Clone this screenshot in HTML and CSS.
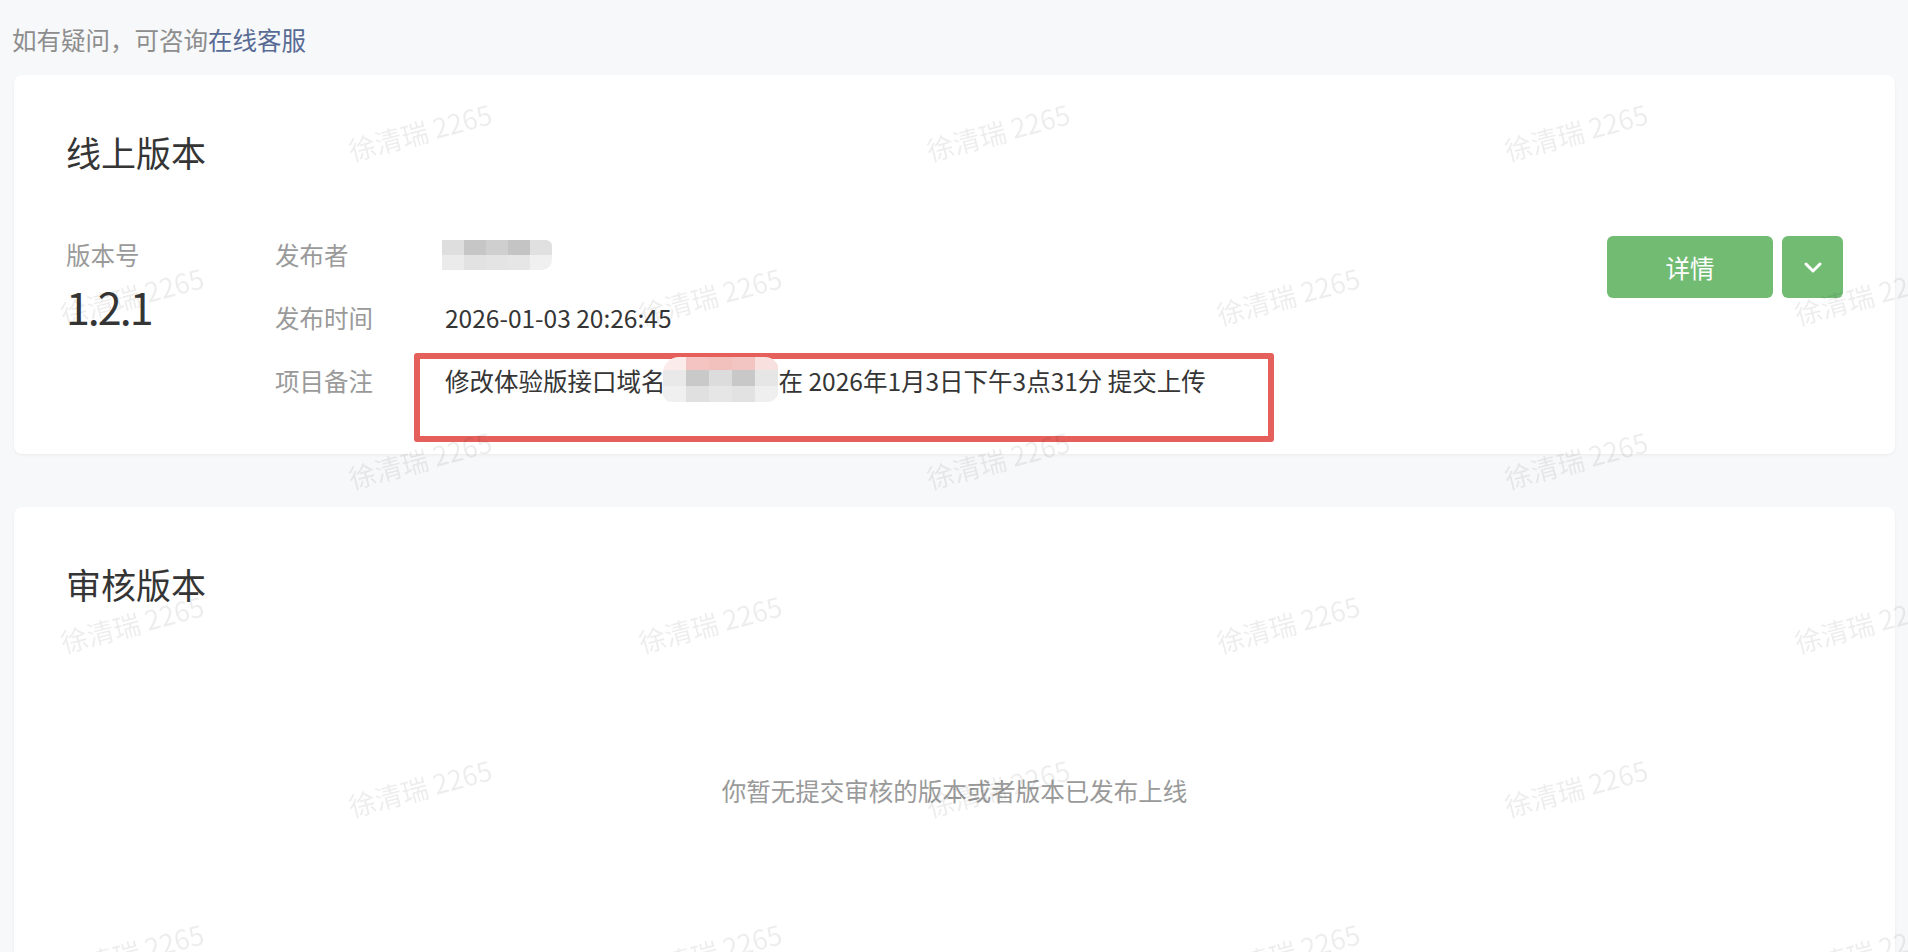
FILE: index.html
```html
<!DOCTYPE html>
<html lang="zh-CN">
<head>
<meta charset="utf-8">
<title>版本管理</title>
<link rel="stylesheet" href="styles.css">
</head>
<body>
<div class="help">如有疑问，可咨询<a class="link" href="#">在线客服</a></div>

<main class="page">
  <section class="card card-online">
    <h2 class="card-title">线上版本</h2>
    <div class="version">
      <div class="version-no">
        <div class="label">版本号</div>
        <div class="version-num">1.2.1</div>
      </div>
      <div class="version-info">
        <div class="row">
          <div class="row-label">发布者</div>
          <div class="row-value">
            <div class="mosaic mosaic-name">
              <i class="m1"></i><i class="m2"></i><i class="m3"></i><i class="m4"></i><i class="m5"></i>
              <i class="m6"></i><i class="m7"></i><i class="m8"></i><i class="m9"></i><i class="m10"></i>
            </div>
          </div>
        </div>
        <div class="row">
          <div class="row-label">发布时间</div>
          <div class="row-value">2026-01-03 20:26:45</div>
        </div>
        <div class="row">
          <div class="row-label">项目备注</div>
          <div class="row-value remark">
            <span class="mark-box"></span>
            <span>修改体验版接口域名</span><span class="mosaic mosaic-remark">
              <i class="p1"></i><i class="p2"></i><i class="p3"></i><i class="p4"></i><i class="p5"></i>
              <i class="r1"></i><i class="r2"></i><i class="r3"></i><i class="r4"></i><i class="r5"></i>
              <i class="s1"></i><i class="s2"></i><i class="s3"></i><i class="s4"></i><i class="s5"></i>
            </span><span>在 2026年1月3日下午3点31分 提交上传</span>
          </div>
        </div>
      </div>
      <div class="actions">
        <button class="btn btn-main">详情</button>
        <button class="btn btn-drop" aria-label="更多">
          <svg width="18" height="11" viewBox="0 0 18 11"><polyline points="2,2 9,9 16,2" fill="none" stroke="#fff" stroke-width="3" stroke-linecap="round" stroke-linejoin="round"/></svg>
        </button>
      </div>
    </div>
  </section>

  <section class="card card-review">
    <h2 class="card-title">审核版本</h2>
    <div class="empty">你暂无提交审核的版本或者版本已发布上线</div>
  </section>
</main>

<div class="wm" aria-hidden="true">
  <div class="wm-row wm-b"><span>徐清瑞 2265</span><span>徐清瑞 2265</span><span>徐清瑞 2265</span><span>徐清瑞 2265</span></div>
  <div class="wm-row wm-a"><span>徐清瑞 2265</span><span>徐清瑞 2265</span><span>徐清瑞 2265</span></div>
  <div class="wm-row wm-b"><span>徐清瑞 2265</span><span>徐清瑞 2265</span><span>徐清瑞 2265</span><span>徐清瑞 2265</span></div>
  <div class="wm-row wm-a"><span>徐清瑞 2265</span><span>徐清瑞 2265</span><span>徐清瑞 2265</span></div>
  <div class="wm-row wm-b"><span>徐清瑞 2265</span><span>徐清瑞 2265</span><span>徐清瑞 2265</span><span>徐清瑞 2265</span></div>
  <div class="wm-row wm-a"><span>徐清瑞 2265</span><span>徐清瑞 2265</span><span>徐清瑞 2265</span></div>
  <div class="wm-row wm-b"><span>徐清瑞 2265</span><span>徐清瑞 2265</span><span>徐清瑞 2265</span><span>徐清瑞 2265</span></div>
</div>
</body>
</html>
```

FILE: styles.css
```css
* { box-sizing: border-box; }

html, body {
  margin: 0;
  padding: 0;
  height: 100%;
  overflow: hidden;
}

body {
  background: #f7f8fa;
  font-family: "Noto Sans CJK SC", "Noto Sans", sans-serif;
  color: #353535;
}

.help {
  padding: 20px 0 0 12px;
  font-size: 24.5px;
  line-height: 39px;
  color: #8d8d8d;
}

.link {
  color: #576b95;
  text-decoration: none;
}

.page {
  padding: 16px 13px 0 14px;
  display: flex;
  flex-direction: column;
  gap: 53px;
}

.card {
  background: #fff;
  border-radius: 8px;
  padding: 52px;
  box-shadow: 0 1px 3px rgba(0, 0, 0, 0.06);
}

.card-online {
  padding-bottom: 54px;
}

.card-title {
  margin: 0;
  font-size: 35px;
  font-weight: 400;
  line-height: 49px;
  color: #353535;
}

.version {
  display: flex;
  align-items: flex-start;
  margin-top: 59px;
}

.version-no {
  width: 209px;
  flex-shrink: 0;
}

.label,
.row-label {
  font-size: 24.5px;
  line-height: 39px;
  color: #9a9a9a;
}

.version-num {
  font-size: 43px;
  line-height: 60px;
  margin-top: 2px;
  color: #353535;
  letter-spacing: -2px;
}

.version-info {
  flex: 1;
  display: flex;
  flex-direction: column;
  gap: 24px;
}

.row {
  display: flex;
  font-size: 24.5px;
  line-height: 39px;
  height: 39px;
}

.row-label {
  width: 170px;
  flex-shrink: 0;
}

.row-value {
  color: #353535;
  display: flex;
  align-items: center;
  height: 39px;
}

.remark {
  position: relative;
  white-space: nowrap;
}

.mark-box {
  position: absolute;
  left: -31px;
  top: -8px;
  width: 860px;
  height: 89px;
  border: 6px solid #e5605b;
  border-radius: 3px;
  z-index: 1;
}

.mosaic {
  display: grid;
  position: relative;
  z-index: 2;
}

.mosaic i {
  display: block;
}

.mosaic-name {
  grid-template-columns: repeat(5, 22px);
  grid-template-rows: 15px 15px;
  margin-left: -3px;
  border-radius: 0 6px 10px 0;
  overflow: hidden;
  filter: blur(0.6px);
}

.m1 { background: #dedede; }
.m2 { background: #c6c6c6; }
.m3 { background: #cfcfcf; }
.m4 { background: #c4c4c4; }
.m5 { background: #e0e0e0; }
.m6 { background: #ebebeb; }
.m7 { background: #e2e2e2; }
.m8 { background: #e4e4e4; }
.m9 { background: #e6e6e6; }
.m10 { background: #f0f0f0; }

.mosaic-remark {
  grid-template-columns: repeat(5, 23px);
  grid-template-rows: 13px 16px 16px;
  width: 116px;
  margin: -4px 0 -2px -3px;
  border-radius: 16px 14px 12px 8px;
  overflow: hidden;
  filter: blur(0.6px);
}

.p1 { background: #fbeceb; }
.p2 { background: #f3c4c1; }
.p3 { background: #f2c0bd; }
.p4 { background: #f3c5c2; }
.p5 { background: #f8e0de; }
.r1 { background: #e9e9e9; }
.r2 { background: #c9c9c9; }
.r3 { background: #dcdcdc; }
.r4 { background: #c8c8c8; }
.r5 { background: #e6e6e6; }
.s1 { background: #f0f0f0; }
.s2 { background: #e0e0e0; }
.s3 { background: #e6e6e6; }
.s4 { background: #e2e2e2; }
.s5 { background: #efefef; }

.actions {
  display: flex;
  gap: 9px;
  margin-top: 1px;
}

.btn {
  height: 62px;
  border: 0;
  border-radius: 6px;
  background: #72bb73;
  color: #fff;
  font-family: inherit;
  font-size: 24.5px;
  padding: 0;
  display: flex;
  align-items: center;
  justify-content: center;
  cursor: pointer;
}

.btn-main { width: 166px; }
.btn-drop { width: 61px; }

.card-review {
  height: 600px;
}

.empty {
  margin-top: 163px;
  text-align: center;
  font-size: 24.5px;
  line-height: 39px;
  color: #9a9a9a;
}

/* watermark overlay */
.wm {
  position: fixed;
  inset: 0;
  pointer-events: none;
  overflow: hidden;
  z-index: 10;
  margin-top: -96px;
}

.wm-row {
  display: flex;
  height: 164px;
  align-items: center;
  white-space: nowrap;
}

.wm-a { padding-left: 349px; }
.wm-b { padding-left: 61px; }

.wm-row span {
  width: 578px;
  flex-shrink: 0;
  font-size: 27px;
  color: rgba(0, 0, 0, 0.07);
  font-family: "Noto Sans CJK SC", sans-serif;
  transform: rotate(-15deg);
  transform-origin: 0 50%;
}
```
